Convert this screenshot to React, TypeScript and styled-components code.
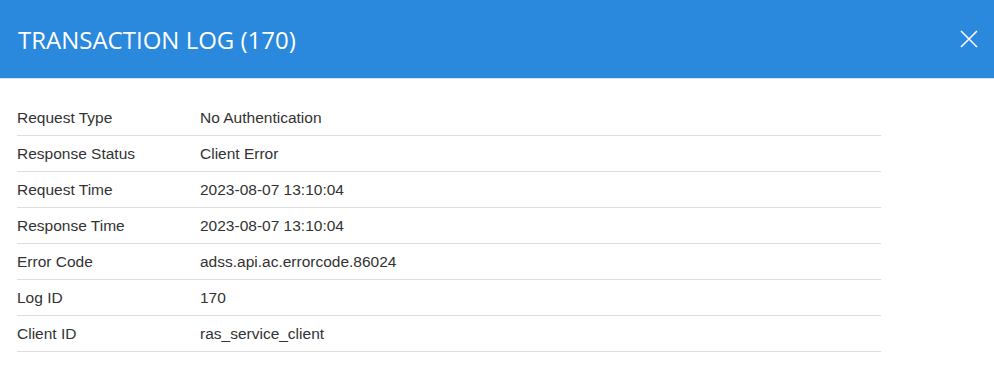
import React from 'react';
import styled, { createGlobalStyle } from 'styled-components';

const GlobalStyle = createGlobalStyle`
  body {
    margin: 0;
    background: #fff;
  }
`;

const Modal = styled.div`
  width: 994px;
  height: 368px;
  background: #fff;
  display: flex;
  flex-direction: column;
  overflow: hidden;
`;

const Header = styled.header`
  flex-shrink: 0;
  height: 79px;
  background: #2a88dd;
  border-bottom: 1px solid #d6e3ee;
  display: flex;
  align-items: center;
  justify-content: space-between;
  padding: 0 16px 0 18px;
  box-sizing: border-box;
`;

const Title = styled.h1`
  margin: 0;
  font-family: 'Open Sans', 'Noto Sans', sans-serif;
  font-weight: 400;
  font-size: 24px;
  color: #fff;
  letter-spacing: 0;
`;

const CloseButton = styled.button`
  border: 0;
  background: none;
  padding: 0;
  width: 18px;
  height: 18px;
  display: flex;
  cursor: pointer;
`;

const Body = styled.div`
  padding: 21px 17px 20px;
`;

const Table = styled.div`
  width: 864px;
  font-family: Arial, 'Liberation Sans', sans-serif;
  font-size: 15.5px;
  color: #333;
`;

const Row = styled.div`
  display: grid;
  grid-template-columns: 183px 1fr;
  height: 36px;
  align-items: center;
  border-bottom: 1px solid #dedede;
  box-sizing: border-box;
`;

const Cell = styled.span`
  line-height: 18px;
`;

const rows: [string, string][] = [
  ['Request Type', 'No Authentication'],
  ['Response Status', 'Client Error'],
  ['Request Time', '2023-08-07 13:10:04'],
  ['Response Time', '2023-08-07 13:10:04'],
  ['Error Code', 'adss.api.ac.errorcode.86024'],
  ['Log ID', '170'],
  ['Client ID', 'ras_service_client'],
];

const App = (): JSX.Element => {
  return (
    <Modal>
      <GlobalStyle />
      <Header>
        <Title>TRANSACTION LOG (170)</Title>
        <CloseButton aria-label='close'>
          <svg width='18' height='18' viewBox='0 0 18 18'>
            <path d='M1 1 L17 17 M17 1 L1 17' stroke='#fff' strokeWidth='1.6' />
          </svg>
        </CloseButton>
      </Header>
      <Body>
        <Table>
          {rows.map(([label, value]) => (
            <Row key={label}>
              <Cell>{label}</Cell>
              <Cell>{value}</Cell>
            </Row>
          ))}
        </Table>
      </Body>
    </Modal>
  );
};

export default App;
